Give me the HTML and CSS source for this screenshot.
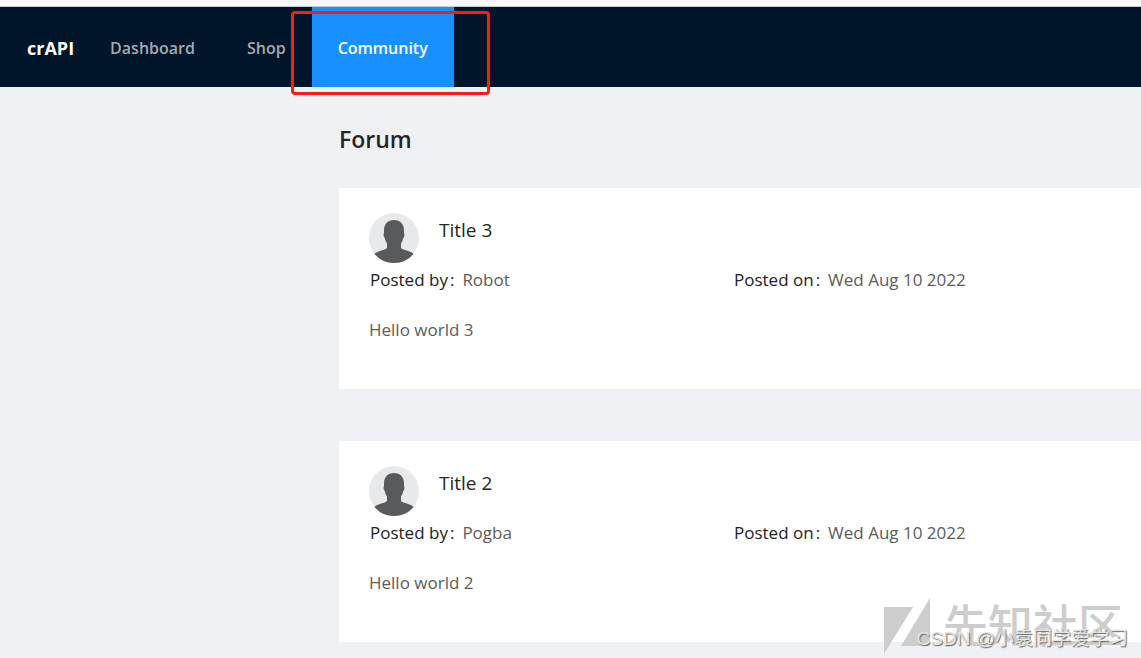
FILE: index.html
```
<!DOCTYPE html>
<html lang="en">
<head>
<meta charset="utf-8">
<title>crAPI Forum</title>
<link rel="stylesheet" href="styles.css">
</head>
<body>
<svg class="defs" aria-hidden="true">
  <symbol id="person" viewBox="0 0 50 50">
    <circle cx="25" cy="25" r="25" fill="#e7e9eb"/>
    <path fill="#595a5c" d="M25 7c6 0 10 4 10 10v3c.8 1 .4 4-.8 5-.5 2.500-1.200 4-2.200 5.500v4.500c2 2.300 9.500 2.500 12.500 6Q37 50 25 50T5.500 41c3-3.500 10.500-3.700 12.500-6v-4.500c-1-1.500-1.700-3-2.200-5.500-1.200-1-1.600-4-.8-5v-3c0-6 4-10 10-10z"/>
  </symbol>
</svg>
<header class="header">
  <nav class="nav">
    <a class="brand" href="#">crAPI</a>
    <a class="item" href="#">Dashboard</a>
    <a class="item" href="#">Shop</a>
    <a class="item active" href="#" aria-current="page">Community</a>
  </nav>
  <div class="highlight"></div>
</header>
<main class="main">
  <h1 class="heading">Forum</h1>
  <div class="posts">
    <article class="card">
      <div class="top"><svg class="avatar" role="img" aria-label="Avatar"><use href="#person"/></svg><h2 class="title">Title 3</h2></div>
      <div class="meta">
        <div class="field"><span class="label">Posted by</span><span class="colon">:</span><span>Robot</span></div>
        <div class="field"><span class="label">Posted on</span><span class="colon">:</span><span>Wed Aug 10 2022</span></div>
      </div>
      <p class="text">Hello world 3</p>
    </article>
    <article class="card">
      <div class="top"><svg class="avatar" role="img" aria-label="Avatar"><use href="#person"/></svg><h2 class="title">Title 2</h2></div>
      <div class="meta">
        <div class="field"><span class="label">Posted by</span><span class="colon">:</span><span>Pogba</span></div>
        <div class="field"><span class="label">Posted on</span><span class="colon">:</span><span>Wed Aug 10 2022</span></div>
      </div>
      <p class="text">Hello world 2</p>
    </article>
  </div>
</main>
<div class="watermark">
  <svg class="mark" viewBox="0 0 46 56" aria-hidden="true"><path fill="#cdcdcd" d="M0 9h29L0 56zM46 0v48H17z"/></svg>
  <span class="site">先知社区</span>
</div>
<div class="credit">CSDN @小袁同学爱学习</div>
</body>
</html>
```
FILE: styles.css
```
* { box-sizing: border-box; }
body {
  margin: 0;
  min-height: 100vh;
  background: #f0f1f5;
  color: #5c5c5c;
  font: 17px/30px "Open Sans", "Noto Sans", "Noto Sans CJK SC", sans-serif;
  position: relative;
  overflow-x: hidden;
}
.defs { position: absolute; width: 0; height: 0; }
.header {
  position: relative;
  border-top: 6px solid #f9f9fb;
  background: #001529;
}
.nav {
  display: flex;
  height: 81px;
  border-top: 1px solid #c4cacd;
  line-height: 82px;
}
.nav a { text-decoration: none; }
.brand { padding: 0 10px 0 27px; color: #fff; font-size: 18px; font-weight: 700; }
.item { padding: 0 26px; color: #a2abb2; font-size: 16px; font-weight: 600; }
.active { background: #1890ff; color: #fff; }
.highlight {
  position: absolute;
  left: 291px;
  top: 5px;
  width: 199px;
  height: 84px;
  border: 3px solid #fc1b14;
  border-radius: 4px;
}
.main { padding: 32px 0 15px 339px; }
.heading {
  margin: 0 0 29px;
  color: #262626;
  font-size: 23px;
  line-height: 40px;
  font-weight: 600;
}
.posts { display: grid; gap: 52px; }
.card { padding: 25px 30px 44px; background: #fff; }
.top { display: flex; gap: 20px; }
.avatar { width: 50px; height: 50px; }
.title {
  margin: 0;
  padding-top: 2px;
  color: #262626;
  font-size: 19px;
  font-weight: 400;
}
.meta { display: grid; grid-template-columns: 364px 1fr; padding: 2px 0 20px 1px; }
.label, .colon { color: #222; }
.colon { margin: 0 8px 0 2px; }
.text { margin: 0; }
.watermark {
  position: absolute;
  right: 18px;
  bottom: 4px;
  display: flex;
  align-items: center;
  gap: 13px;
  color: #cdcdcd;
}
.mark { width: 46px; height: 56px; }
.site { font: 500 45px/52px "Noto Sans CJK SC", sans-serif; padding-bottom: 4px; }
.credit {
  position: absolute;
  right: 13px;
  bottom: 4px;
  color: #e4e4e4;
  font: 19px/30px "Liberation Sans", "Noto Sans CJK SC", sans-serif;
  text-shadow: 1px 1px 1px #666;
}
```
